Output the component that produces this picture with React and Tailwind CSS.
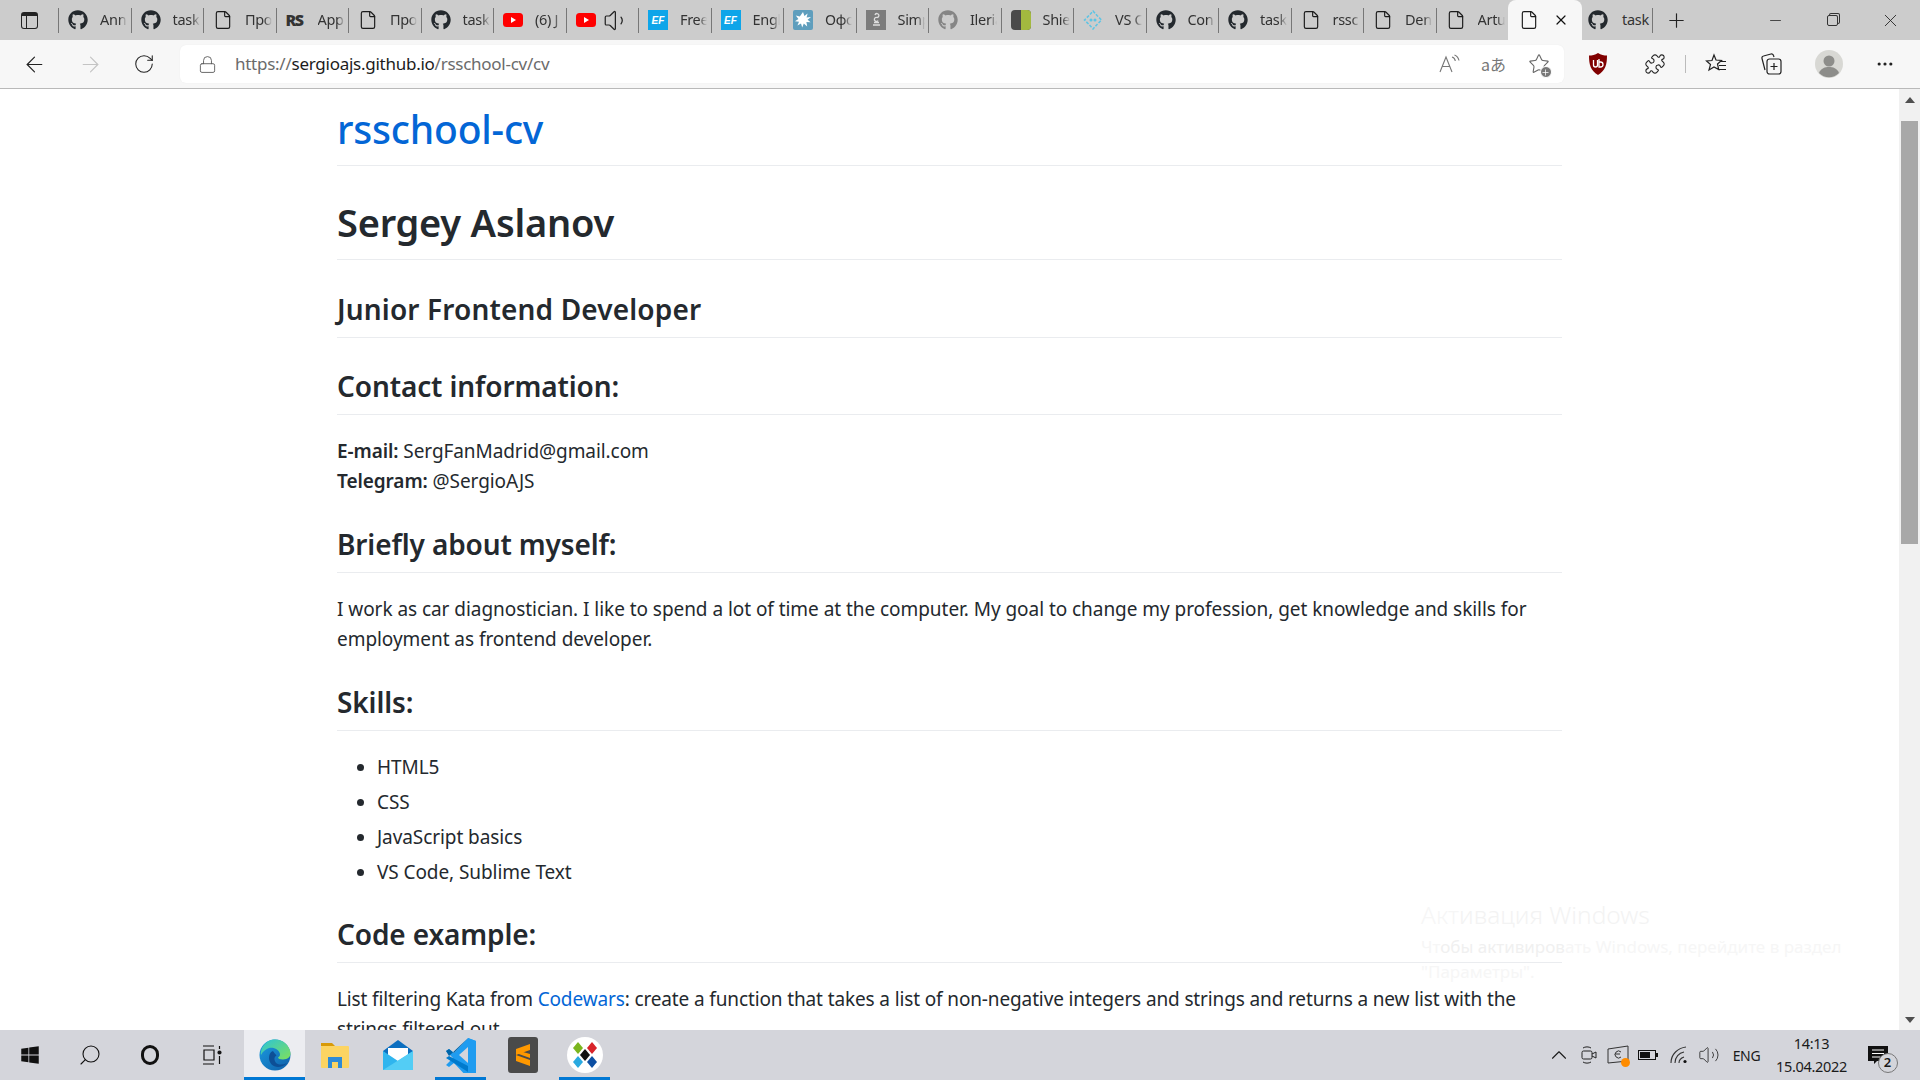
import React from 'react';
import { File, Volume1, Volume2, ArrowLeft, ArrowRight, RotateCw, Lock, Plus, X, Minus, Puzzle, Search, ChevronUp, Ellipsis, Star } from 'lucide-react';
import { FaGithub, FaWindows } from 'react-icons/fa';

const uiFont = "font-['Noto_Sans',sans-serif]";

const Youtube = () => (
  <svg width="20" height="14" viewBox="0 0 20 14"><rect width="20" height="14" rx="3.5" fill="#f00" /><path d="M8 4l5 3-5 3z" fill="#fff" /></svg>
);

const Ef = () => (
  <div className="w-5 h-5 bg-[#0ea5e9] text-white text-[10px] font-bold italic flex items-center justify-center font-['Liberation_Sans',sans-serif]">EF</div>
);

const Office = () => (
  <svg width="20" height="20" viewBox="0 0 20 20"><rect width="20" height="20" rx="2" fill="#5f9ebd" /><path d="M10 2l1.4 4 3.2-2.6-1 4 4.4-.4-3.4 2.8 3 2.4-4.2-.2.8 4.6-3.4-3-1.6 4-1.2-4.2-3.6 2 1.6-3.6-4-.6 3.4-2.2-2.6-3.6 4 1z" fill="#fff" /></svg>
);

const Sim = () => (
  <svg width="20" height="20" viewBox="0 0 20 20"><rect width="20" height="20" fill="#7c7c7c" /><path d="M7 15h7M8 12.5h5M9 5a2 2 0 1 1 2 2.500 2 2 0 1 0 1 3" fill="none" stroke="#ddd" strokeWidth="1.300" /></svg>
);

const Shield = () => (
  <svg width="20" height="20" viewBox="0 0 20 20"><rect width="20" height="20" rx="4" fill="#4a4a4a" /><path d="M10 0h6a4 4 0 0 1 4 4v12a4 4 0 0 1-4 4h-6z" fill="#a3b93f" /></svg>
);

const VsLogo = () => (
  <svg width="20" height="20" viewBox="0 0 20 20" fill="none" stroke="#5cc4e4" strokeWidth="1.500"><path d="M10 1l4 4.500 4.500 4.500-4.500 4.500-4 4.500-4-4.500-4.500-4.500 4.500-4.500z" strokeDasharray="3 1.500" /><circle cx="8" cy="10" r=".8" /><circle cx="12" cy="10" r=".8" /></svg>
);

const tabIcon = {
  gh: <FaGithub size={20} color="#24292e" />,
  ghGray: <FaGithub size={20} color="#858585" />,
  file: <File size={20} strokeWidth={1.4} color="#1b1b1b" />,
  rs: <span className="text-[16px] font-black tracking-[-1.5px] text-[#333] w-5">RS</span>,
  yt: <Youtube />,
  ef: <Ef />,
  office: <Office />,
  sim: <Sim />,
  shield: <Shield />,
  vs: <VsLogo />,
};

const tabs = [
  ['gh', 'Ann'], ['gh', 'task'], ['file', 'Про'], ['rs', 'App'], ['file', 'Про'], ['gh', 'task'],
  ['yt', '(6) J'], ['yt', ''], ['ef', 'Free'], ['ef', 'Engl'], ['office', 'Офс'], ['sim', 'Simp'],
  ['ghGray', 'Ileria'], ['shield', 'Shie'], ['vs', 'VS C'], ['gh', 'Con'], ['gh', 'task'], ['file', 'rssc'],
  ['file', 'Den'], ['file', 'Artu'],
];

const Tab = ({ icon, label }) => (
  <div className="w-[72.5px] h-[25px] shrink-0 flex items-center border-r border-[#777] pl-[9px] overflow-hidden">
    <div className="w-5 flex justify-center shrink-0">{tabIcon[icon]}</div>
    {icon === 'yt' && !label ? (
      <Volume1 size={27} strokeWidth={1.1} className="ml-[7px] text-[#222]" />
    ) : (
      <span className="ml-[12px] w-[27px] overflow-hidden whitespace-nowrap text-[14.5px] text-[#333] tracking-[-0.3px] [mask-image:linear-gradient(to_right,black_70%,transparent)]">{label}</span>
    )}
  </div>
);

const TabBar = () => (
  <div className="h-10 shrink-0 bg-[#cccccc] flex items-center">
    <div className="w-[59px] h-[25px] border-r border-[#777] flex items-center pl-[21px] shrink-0">
      <div className="w-[17px] h-[17px] rounded-[3px] border border-[#222] border-t-[4px] flex">
        <div className="w-[5px] border-r border-[#222]" />
      </div>
    </div>
    {tabs.map((t, i) => <Tab key={i} icon={t[0]} label={t[1]} />)}
    <div className="w-[74px] h-10 shrink-0 self-end bg-[#f7f7f7] rounded-t-lg flex items-center pl-[11px] -ml-px">
      <File size={20} strokeWidth={1.4} color="#1b1b1b" />
      <X size={16} strokeWidth={1.8} className="ml-[14px] text-[#111]" />
    </div>
    <div className="w-[71px] h-[25px] shrink-0 flex items-center border-r border-[#777] pl-[6px]">
      <FaGithub size={20} color="#24292e" />
      <span className="ml-[14px] text-[14.5px] text-[#333] tracking-[-0.3px]">task</span>
    </div>
    <Plus size={23} strokeWidth={1.2} className="ml-[12px] text-[#222]" />
    <div className="ml-auto flex items-center text-[#222]">
      <div className="w-[57px] flex justify-center"><Minus size={17} strokeWidth={1.1} /></div>
      <div className="w-[57px] flex justify-center">
        <div className="w-[11px] h-[11px] border border-[#333] rounded-[2px] shadow-[2px_-2px_0_-1px_#cccccc,2px_-2px_0_0_#333]" />
      </div>
      <div className="w-[59px] flex justify-center"><X size={21} strokeWidth={1} /></div>
    </div>
  </div>
);

const ReadAloud = () => (
  <svg width="22" height="22" viewBox="0 0 22 22" fill="none" stroke="#777" strokeWidth="1.100"><path d="M2 19L8 4l6 15M4.500 13.500h7" /><path d="M14 4c2 .5 3 2 3.300 4M16.500 2c2.500 1 4 3 4.500 5.500" /></svg>
);

const FavAdd = () => (
  <div className="relative w-[22px] h-[22px]">
    <Star size={22} strokeWidth={1.2} className="text-[#666]" />
    <div className="absolute -right-[2px] -bottom-[3px] w-[12px] h-[12px] rounded-full bg-[#777] border border-white flex items-center justify-center">
      <Plus size={9} strokeWidth={2} className="text-white" />
    </div>
  </div>
);

const UBlock = () => (
  <svg width="20" height="24" viewBox="0 0 20 24"><path d="M10 1c3 2 6 2.500 9 2.500 0 9-1.500 15-9 19.500C2.500 18.500 1 12.500 1 3.500 4 3.500 7 3 10 1z" fill="#800000" /><path d="M5.500 8v5a2 2 0 0 0 4 0V8M11 7v8h1.500a2.500 2.500 0 0 0 0-5H11" fill="none" stroke="#fff" strokeWidth="1.300" /></svg>
);

const FavList = () => (
  <svg width="22" height="22" viewBox="0 0 22 22" fill="none" stroke="#222" strokeWidth="1.200"><path d="M9 2l2 5 5.500.5-4 3.500 1.200 5.500L9 14l-5 3 1.500-5.500-4-3.500L7 7.500z" /><path d="M15 8.500h6M14 12.500h7M14 16.500h7" /></svg>
);

const Collections = () => (
  <svg width="22" height="24" viewBox="0 0 22 24" fill="none" stroke="#222" strokeWidth="1.200"><path d="M5 18L2 6.500A2 2 0 0 1 3.500 4L11 2a2 2 0 0 1 2.500 1.500l.5 1.500" /><rect x="7" y="7" width="14" height="15" rx="2.500" /><path d="M14 11v7M10.500 14.500h7" /></svg>
);

const Slot = ({ w, children }) => <div className={`${w} h-full flex items-center justify-center shrink-0`}>{children}</div>;

const Toolbar = () => (
  <div className="h-[49px] shrink-0 bg-[#f7f7f7] border-b border-[#b9b9b9] flex items-center">
    <div className="w-[180px] h-full flex items-center pl-[10px] shrink-0">
      <Slot w="w-12"><ArrowLeft size={25} strokeWidth={1.1} className="text-[#222]" /></Slot>
      <Slot w="w-16"><ArrowRight size={25} strokeWidth={1.1} className="text-[#c4c4c4]" /></Slot>
      <Slot w="w-11"><RotateCw size={22} strokeWidth={1.15} className="text-[#222]" /></Slot>
    </div>
    <div className="w-[1384px] h-[38px] bg-white rounded-md flex items-center shrink-0 shadow-[0_0_1px_#e5e5e5]">
      <Lock size={19} strokeWidth={1.1} className="ml-[18px] text-[#555]" />
      <div className="ml-[18px] text-[17px] tracking-[-0.26px] text-[#6b6b6b] whitespace-nowrap">
        https://<span className="text-[#1c1c1c]">sergioajs.github.io</span>/rsschool-cv/cv
      </div>
      <div className="ml-auto flex items-center h-full pr-[3px]">
        <Slot w="w-[45px]"><ReadAloud /></Slot>
        <Slot w="w-[45px]"><span className="text-[16px] text-[#777] font-['Noto_Sans_CJK_JP',sans-serif]">aあ</span></Slot>
        <Slot w="w-[45px]"><FavAdd /></Slot>
      </div>
    </div>
    <Slot w="w-[68px]"><UBlock /></Slot>
    <Slot w="w-[45px]"><Puzzle size={22} strokeWidth={1.2} className="text-[#222]" /></Slot>
    <div className="w-px h-[18px] bg-[#bbb] mx-[8px] shrink-0" />
    <Slot w="w-[44px]"><FavList /></Slot>
    <Slot w="w-[66px]"><Collections /></Slot>
    <Slot w="w-[50px]">
      <svg width="28" height="28" viewBox="0 0 28 28"><circle cx="14" cy="14" r="14" fill="#d8d8d4" /><circle cx="14" cy="11" r="5.500" fill="#8d8d8a" /><path d="M4 23c2-5 6-6 10-6s8 1 10 6a14 14 0 0 1-20 0z" fill="#8d8d8a" /></svg>
    </Slot>
    <Slot w="w-[62px]"><Ellipsis size={20} strokeWidth={1.8} className="text-[#222]" /></Slot>
  </div>
);

const H2 = ({ children, mt = 'mt-[29px]', track = 'tracking-[-0.12px]' }) => (
  <h2 className={`${mt} pb-[9px] leading-[38px] text-[28px] font-semibold ${track} border-b border-[#eaecef]`}>{children}</h2>
);

const Page = () => (
  <div className="w-[1562px] pl-[337px] text-[#24292e] text-[19px] leading-[30px] tracking-[-0.08px] shrink-0">
    <div className="pt-[15px] pb-[11px] border-b border-[#eaecef] leading-[50px] text-[39px] font-medium tracking-[-0.2px] text-[#0366d6]">rsschool-cv</div>
    <h1 className="mt-[31px] pb-[12px] border-b border-[#eaecef] leading-[50px] text-[38px] font-semibold tracking-[-0.23px]">Sergey Aslanov</h1>
    <H2 mt="mt-[30px]" track="tracking-[0.15px]">Junior Frontend Developer</H2>
    <H2>Contact information:</H2>
    <p className="mt-[21px]"><b className="font-semibold">E-mail:</b> SergFanMadrid@gmail.com<br /><b className="font-semibold">Telegram:</b> @SergioAJS</p>
    <H2>Briefly about myself:</H2>
    <p className="mt-[21px] tracking-[-0.05px]">I work as car diagnostician. I like to spend a lot of time at the computer. My goal to change my profession, get knowledge and skills for employment as frontend developer.</p>
    <H2>Skills:</H2>
    <ul className="mt-[21px] pl-10 list-disc flex flex-col gap-[5px]">
      <li>HTML5</li>
      <li>CSS</li>
      <li>JavaScript basics</li>
      <li>VS Code, Sublime Text</li>
    </ul>
    <H2 mt="mt-[28px]">Code example:</H2>
    <p className="mt-[21px] tracking-[-0.13px]">List filtering Kata from <a className="text-[#0366d6]">Codewars</a>: create a function that takes a list of non-negative integers and strings and returns a new list with the strings filtered out.</p>
  </div>
);

const Watermark = () => (
  <div className="absolute left-[1421px] top-[810px] w-[470px] text-[#f6f6f6] pointer-events-none">
    <div className="text-[24.5px] leading-[32px] font-light whitespace-nowrap">Акт<span className="text-[#f3f3f3]">ивация Windows</span></div>
    <div className="text-[17px] leading-[25px] mt-[3px] whitespace-nowrap">
      Чт<span className="text-[#f0f0f0]">обы активиров</span>ать Windows, перейдите в раздел<br />"Параметры".
    </div>
  </div>
);

const Scrollbar = () => (
  <div className="w-[21px] ml-auto shrink-0 bg-[#f1f1f1] flex flex-col items-center">
    <div className="h-[32px] w-full flex items-start justify-center pt-[8px]">
      <div className="border-x-[5px] border-x-transparent border-b-[6px] border-b-[#505050]" />
    </div>
    <div className="h-[423px] w-[17px] bg-[#a8a8a8]" />
    <div className="mt-auto h-[21px] flex items-center">
      <div className="border-x-[5px] border-x-transparent border-t-[6px] border-t-[#505050]" />
    </div>
  </div>
);

const Edge = () => (
  <svg width="32" height="32" viewBox="0 0 32 32">
    <defs>
      <linearGradient id="edgeA" x1="0" y1="0" x2="1" y2="1"><stop offset="0" stopColor="#2bc4d8" /><stop offset="1" stopColor="#7fe05a" /></linearGradient>
      <linearGradient id="edgeB" x1="0" y1="0" x2="1" y2="1"><stop offset="0" stopColor="#1b9de2" /><stop offset="1" stopColor="#0f5ea8" /></linearGradient>
    </defs>
    <circle cx="16" cy="16" r="15.500" fill="url(#edgeB)" />
    <path d="M3 9C6 3 11 .5 16 .5c8 0 15 6 15.500 14 .2 3-3 6-7.500 6-3 0-5-1-5-2 2-1 2.500-3 1.500-5C19 10 14 8 10 9 7 10 4 12 2 16c-.500-2 0-4 1-7z" fill="url(#edgeA)" />
    <path d="M14 12c-3 1-4 4-4 7 0 5 4 9 9 9 3 0 7-1.500 9-4-2 1-4 1.500-6 1.500-4 0-6-2-6.500-5-.3-2 .5-3 2-4-1-1-2.500-3-3.500-4.500z" fill="#0d4f96" />
  </svg>
);

const Explorer = () => (
  <svg width="30" height="30" viewBox="0 0 30 30">
    <path d="M1 3h11l3 3H1z" fill="#d89a08" />
    <rect x="1" y="6" width="28" height="22" rx="1" fill="#fcd462" />
    <path d="M8 28V17h14v11h-4v-6h-6v6z" fill="#2f8bd6" />
  </svg>
);

const Mail = () => (
  <svg width="32" height="32" viewBox="0 0 32 32">
    <path d="M1 12L16 1l15 11v19H1z" fill="#0c6fc0" />
    <path d="M6 9h20v9l-10 6-10-6z" fill="#fff" />
    <path d="M1 12l15 10 15-10v19H1z" fill="#2fb5ee" />
    <path d="M31 12v19H1z" fill="#53cdf5" />
  </svg>
);

const VsCode = () => (
  <svg width="32" height="36" viewBox="0 0 32 36">
    <path d="M23 1L9 16l-5-4-3 2 7 7-7 7 3 2 5-4 14 15 8-3V4z" fill="#1f9cf0" />
    <path d="M23 1L4 19l-3-5 3-2 5 4z" fill="#0065a9" />
    <path d="M23 35L1 21l3-2 19 10z" fill="#007acc" />
    <path d="M23 10L14 18l9 8z" fill="#d4d5db" />
    <path d="M23 1l8 3v28l-8 3z" fill="#1f9cf0" />
  </svg>
);

const Sublime = () => (
  <svg width="30" height="36" viewBox="0 0 30 36">
    <rect width="30" height="36" rx="3" fill="#4a4a4a" />
    <path d="M22 7v6L8 18v-6zM8 18l14 5v6L8 24z" fill="#ff9800" />
    <path d="M8 16l14 5v-4L8 13z" fill="#ff9800" />
  </svg>
);

const Diamonds = () => (
  <svg width="36" height="36" viewBox="0 0 36 36">
    <circle cx="18" cy="18" r="18" fill="#fff" />
    <path d="M11 5l5 6-5 6-5-6z" fill="#7ab51d" />
    <path d="M25 5l5 6-5 6-5-6z" fill="#d8232a" />
    <path d="M18 12l5 6-5 6-5-6z" fill="#111" />
    <path d="M11 19l5 6-5 6-5-6z" fill="#29a9e0" />
    <path d="M25 19l5 6-5 6-5-6z" fill="#0d4fa3" />
  </svg>
);

const TaskItem = ({ w, active, running, children }) => (
  <div className={`${w} h-full shrink-0 flex items-center justify-center relative ${active ? 'bg-[#ecedf1]' : ''}`}>
    {children}
    {running && <div className="absolute bottom-0 left-0 right-0 h-[3px] bg-[#0078d4]" />}
  </div>
);

const TaskView = () => (
  <svg width="20" height="20" viewBox="0 0 20 20" fill="none" stroke="#111" strokeWidth="1.200"><path d="M1 1h11M1 19h11M2 5h10v10H2zM17.500 1v3M17.500 11v8" /><circle cx="17.500" cy="7.500" r="1.500" fill="#111" /></svg>
);

const WifiArcs = () => (
  <svg width="20" height="20" viewBox="0 0 20 20" fill="none" stroke="#333" strokeWidth="1.100">
    <path d="M2 18C2 9 9 3 17 2" />
    <path d="M6 18C6 12 10 8 15 7" />
    <path d="M10 18c0-3 2-5 5-6" />
    <circle cx="16" cy="16.500" r="1.600" fill="#111" stroke="none" />
  </svg>
);

const Tray = () => (
  <div className="ml-auto flex items-center h-full pr-[18px] text-[#1a1a1a]">
    <Slot w="w-[32px]"><ChevronUp size={26} strokeWidth={1} /></Slot>
    <Slot w="w-[28px]">
      <svg width="18" height="20" viewBox="0 0 18 20" fill="none" stroke="#222"><rect x="2" y="6" width="10" height="8" rx="1.500" /><path d="M12 9l4-2v6l-4-2M3 3c2-1.500 6-1.500 8 0M3 17c2 1.500 6 1.500 8 0" /></svg>
    </Slot>
    <Slot w="w-[30px]">
      <div className="relative">
        <svg width="22" height="20" viewBox="0 0 22 20" fill="none" stroke="#333"><path d="M1 4l20-3v15l-20 2z" /><path d="M14 7a3.500 3.500 0 1 0 0 5M8 9h5" /></svg>
        <div className="absolute -right-[1px] -bottom-[2px] w-[9px] h-[9px] rounded-full bg-[#ff8c00]" />
      </div>
    </Slot>
    <Slot w="w-[30px]">
      <svg width="20" height="10" viewBox="0 0 20 10"><rect x=".5" y=".5" width="17" height="9" fill="none" stroke="#111" /><rect x="2" y="2" width="10" height="6" fill="#111" /><rect x="18" y="3" width="2" height="4" fill="#111" /></svg>
    </Slot>
    <Slot w="w-[31px]"><WifiArcs /></Slot>
    <Slot w="w-[29px]"><Volume2 size={22} strokeWidth={1} className="text-[#333]" /></Slot>
    <div className="w-[47px] text-center text-[14px] tracking-[-0.3px] text-[#1a1a1a] shrink-0">ENG</div>
    <div className="w-[83px] text-center text-[14.5px] leading-[23px] tracking-[-0.3px] shrink-0">
      <div>14:13</div>
      <div>15.04.2022</div>
    </div>
    <div className="w-[49px] flex justify-center shrink-0">
      <div className="relative">
        <svg width="20" height="18" viewBox="0 0 20 18"><path d="M0 0h20v15H9l-3 3v-3H0z" fill="#111" /><path d="M4 4h12M4 7.500h12M4 11h8" stroke="#fff" /></svg>
        <div className="absolute -right-[10px] top-[7px] w-[20px] h-[20px] rounded-full border border-[#777] bg-[#d4d5db] flex items-center justify-center text-[13px] font-semibold">2</div>
      </div>
    </div>
  </div>
);

const Taskbar = () => (
  <div className="h-[50px] shrink-0 bg-[#d4d5db] flex items-center">
    <TaskItem w="w-[60px]"><FaWindows size={20} color="#111" /></TaskItem>
    <TaskItem w="w-[60px]"><Search size={24} strokeWidth={1.100} className="text-[#111] -scale-x-100" /></TaskItem>
    <TaskItem w="w-[60px]"><div className="w-[18px] h-[20px] rounded-full border-[3px] border-[#111]" /></TaskItem>
    <TaskItem w="w-[64px]"><TaskView /></TaskItem>
    <TaskItem w="w-[61px]" active running><Edge /></TaskItem>
    <TaskItem w="w-[60px]"><Explorer /></TaskItem>
    <TaskItem w="w-[66px]"><Mail /></TaskItem>
    <div className="w-1 shrink-0" />
    <TaskItem w="w-[51px]" running><VsCode /></TaskItem>
    <TaskItem w="w-[73px]"><Sublime /></TaskItem>
    <TaskItem w="w-[51px]" running><Diamonds /></TaskItem>
    <Tray />
  </div>
);

export default function App() {
  return (
    <div className={`h-screen w-full flex flex-col overflow-hidden bg-white ${uiFont}`}>
      <TabBar />
      <Toolbar />
      <div className="flex-1 min-h-0 flex overflow-hidden relative">
        <Page />
        <Scrollbar />
        <Watermark />
      </div>
      <Taskbar />
    </div>
  );
}
